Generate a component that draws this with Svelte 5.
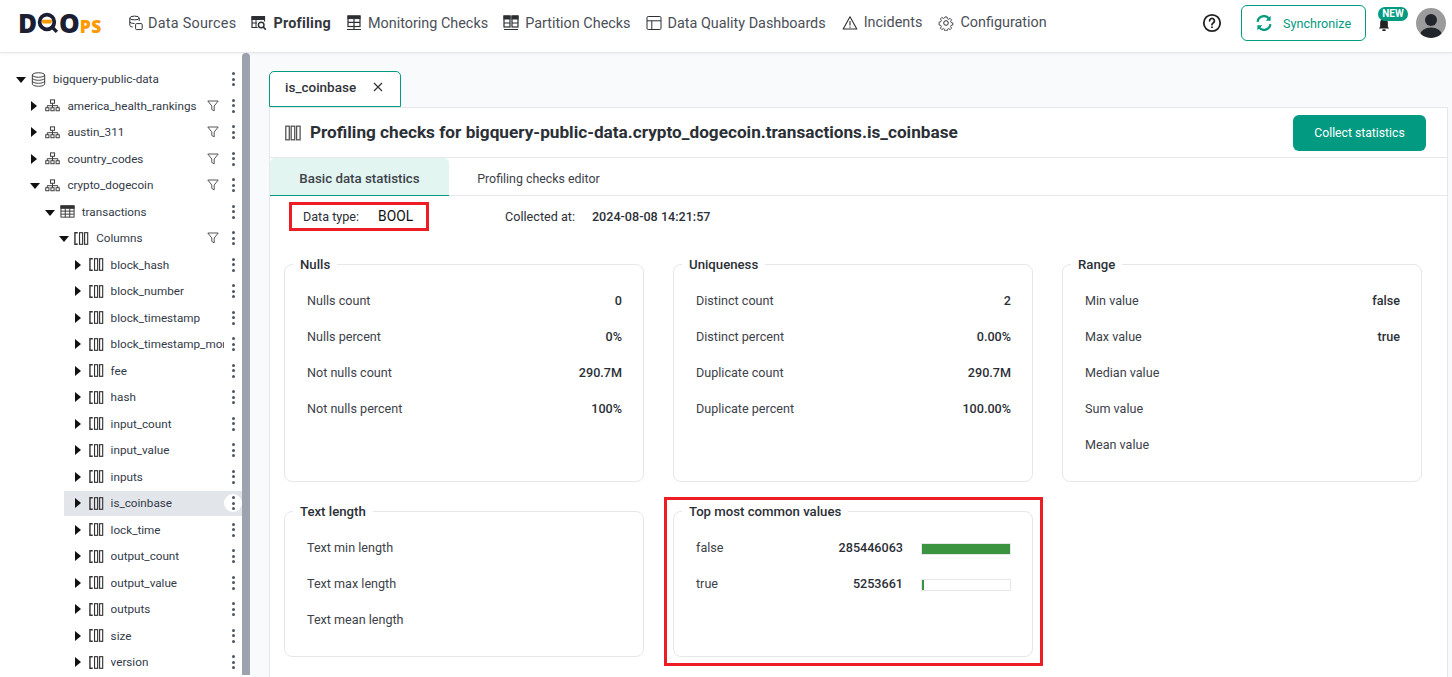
<script lang="ts">
  type Row = { name: string; depth: number; kind: string; open?: boolean; filter?: boolean; active?: boolean };

  const nav = [
    { label: "Data Sources", icon: "sources", wide: true },
    { label: "Profiling", icon: "profiling", active: true, wide: true },
    { label: "Monitoring Checks", icon: "monitoring" },
    { label: "Partition Checks", icon: "partition" },
    { label: "Data Quality Dashboards", icon: "dashboards" },
    { label: "Incidents", icon: "incidents", raised: true },
    { label: "Configuration", icon: "config", raised: true },
  ];

  const columnNames = [
    "block_hash", "block_number", "block_timestamp", "block_timestamp_month", "fee", "hash",
    "input_count", "input_value", "inputs", "is_coinbase", "lock_time", "output_count",
    "output_value", "outputs", "size", "version",
  ];

  const rows: Row[] = [
    { name: "bigquery-public-data", depth: 0, kind: "db", open: true },
    { name: "america_health_rankings", depth: 1, kind: "schema", filter: true },
    { name: "austin_311", depth: 1, kind: "schema", filter: true },
    { name: "country_codes", depth: 1, kind: "schema", filter: true },
    { name: "crypto_dogecoin", depth: 1, kind: "schema", open: true, filter: true },
    { name: "transactions", depth: 2, kind: "table", open: true },
    { name: "Columns", depth: 3, kind: "columns", open: true, filter: true },
    ...columnNames.map((name) => ({ name, depth: 4, kind: "columns", active: name === "is_coinbase" })),
  ];

  const topCards = [
    {
      title: "Nulls",
      rows: [["Nulls count", "0"], ["Nulls percent", "0%"], ["Not nulls count", "290.7M"], ["Not nulls percent", "100%"]],
    },
    {
      title: "Uniqueness",
      rows: [["Distinct count", "2"], ["Distinct percent", "0.00%"], ["Duplicate count", "290.7M"], ["Duplicate percent", "100.00%"]],
    },
    {
      title: "Range",
      rows: [["Min value", "false"], ["Max value", "true"], ["Median value", ""], ["Sum value", ""], ["Mean value", ""]],
    },
  ];

  const textLength = ["Text min length", "Text max length", "Text mean length"];

  const topValues = [
    { label: "false", count: 285446063 },
    { label: "true", count: 5253661 },
  ];
  const maxCount = Math.max(...topValues.map((v) => v.count));
</script>

{#snippet icon(name: string, size: number)}
  <svg class="icon" width={size} height={size} viewBox="0 0 16 16" fill="none" stroke="currentColor" stroke-width="1">
    {#if name === "sources"}
      <ellipse cx="6.5" cy="3" rx="4.7" ry="1.9" />
      <path d="M1.8 3v7.2c0 1 1.2 1.7 3 1.8M11.2 3v3M1.8 6.6c0 1.1 2 1.9 4.7 1.9" />
      <rect x="7.6" y="8.6" width="6.6" height="6" rx="1" />
    {:else if name === "profiling"}
      <path d="M1 1.5h12.5v5M1 1.5v11h5.5" stroke-width="1.2" />
      <rect x="1" y="1.5" width="12.5" height="3" fill="currentColor" />
      <path d="M1 8h5M5 5v7" />
      <circle cx="10.2" cy="10" r="2.8" stroke-width="1.4" />
      <path d="M12.2 12l2.6 2.6" stroke-width="1.6" />
    {:else if name === "monitoring"}
      <rect x="2" y="1" width="12" height="10.5" stroke-width="1.2" />
      <rect x="2" y="1" width="12" height="2.6" fill="currentColor" />
      <path d="M2 7.3h12M8 3.5v8M8 11.5v2.5M1 14.5h14" stroke-width="1.2" />
    {:else if name === "partition"}
      <rect x="1" y="1" width="6" height="11" stroke-width="1.2" />
      <rect x="9" y="1" width="6" height="11" stroke-width="1.2" />
      <rect x="1" y="1" width="6" height="3" fill="currentColor" />
      <rect x="9" y="1" width="6" height="3" fill="currentColor" />
      <path d="M1 8h6M9 8h6M1 14.5h14" stroke-width="1.2" />
    {:else if name === "dashboards"}
      <rect x="1" y="1.5" width="14" height="13" rx="1.2" />
      <path d="M1 5.8h14M5.8 5.8v8.7" />
    {:else if name === "incidents"}
      <path d="M8 1.8L14.8 14H1.2z" stroke-linejoin="round" stroke-width="1.1" />
      <path d="M8 6v4.4M8 11.6v1.2" stroke-width="1.1" />
    {:else if name === "config"}
      <circle cx="8" cy="8" r="2.3" />
      <path d="M6.8 1h2.4l.4 2 1.5.7 1.8-1.1 1.6 1.7-1.1 1.7.6 1.5 2 .5v2.3l-2 .5-.6 1.5 1.1 1.7-1.6 1.7-1.8-1.1-1.5.7-.4 2H6.8l-.4-2-1.5-.7-1.8 1.1-1.6-1.7 1.1-1.7-.6-1.5-2-.5V7l2-.5.6-1.5-1.1-1.7 1.6-1.7 1.8 1.1 1.5-.7z" transform="translate(1.1 1.1) scale(.86)" />
    {:else if name === "db"}
      <ellipse cx="8" cy="3.2" rx="6.6" ry="2.4" />
      <path d="M1.4 3.2v9.6c0 1.3 3 2.4 6.6 2.4s6.6-1.1 6.6-2.4V3.2M1.4 6.4c0 1.3 3 2.4 6.6 2.4s6.6-1.1 6.6-2.4M1.4 9.6c0 1.3 3 2.4 6.6 2.4s6.6-1.1 6.6-2.4" />
    {:else if name === "schema"}
      <rect x="5.8" y="2" width="4.4" height="3.6" />
      <path d="M8 5.6v2.6M2.4 10.4V8.2h11.2v2.2M8 8.2v2.2" />
      <rect x="0.8" y="10.4" width="3.4" height="3.2" />
      <rect x="6.3" y="10.4" width="3.4" height="3.2" />
      <rect x="11.8" y="10.4" width="3.4" height="3.2" />
    {:else if name === "table"}
      <rect x="1" y="2" width="14" height="12" />
      <rect x="1" y="2" width="14" height="2.6" fill="currentColor" />
      <path d="M1 7.6h14M1 10.8h14M5.6 4.6V14M10.4 4.6V14" />
    {:else if name === "columns"}
      <path d="M4 1.8H1v12.4h3" stroke-width="1.5" />
      <rect x="5.9" y="1.8" width="3.3" height="12.4" stroke-width="1.2" />
      <rect x="11.3" y="1.8" width="3.3" height="12.4" stroke-width="1.2" />
    {:else if name === "columns-closed"}
      <rect x="0.8" y="1.2" width="3.5" height="13.6" stroke-width="1.3" />
      <rect x="6.2" y="1.2" width="3.5" height="13.6" stroke-width="1.3" />
      <rect x="11.6" y="1.2" width="3.5" height="13.6" stroke-width="1.3" />
    {/if}
  </svg>
{/snippet}

<div class="page">
  <header class="topbar">
    <div class="logo">
      <span class="logo-dark">D</span>
      <svg class="logo-q" width="22" height="22" viewBox="0 0 21 21">
        <circle cx="9.5" cy="9.5" r="7" fill="#fff" stroke="#1c1f33" stroke-width="3.6" />
        <path d="M4.8 7.5h9.4a5 5 0 0 1-.6 3.4H5.4a5 5 0 0 1-.6-3.4z" fill="#ff9900" />
        <path d="M14.5 14.5l4.5 4.5" stroke="#1c1f33" stroke-width="3.2" />
      </svg>
      <span class="logo-dark">O</span>
      <span class="logo-ps">PS</span>
    </div>
    <nav class="nav">
      {#each nav as item}
        <div class="nav-item" class:active={item.active} class:raised={item.raised} class:wide={item.wide}>
          {@render icon(item.icon, 16)}
          <span>{item.label}</span>
        </div>
      {/each}
    </nav>
    <div class="topbar-right">
      <svg class="help" width="20" height="20" viewBox="0 0 20 20" fill="none" stroke="#222" stroke-width="1.8">
        <circle cx="10" cy="10" r="8.2" />
        <path d="M7.6 7.8a2.4 2.4 0 1 1 3.6 2.1c-.8.5-1.2.9-1.2 1.8" stroke-linecap="round" />
        <path d="M10 13.6v1.4" />
      </svg>
      <button class="sync">
        <svg width="16" height="16" viewBox="0 0 16 16" fill="none" stroke="#029a80" stroke-width="2.2">
          <path d="M1.6 6.8A6.4 6.4 0 0 1 13 3.6" />
          <path d="M14.4 9.2A6.4 6.4 0 0 1 3 12.4" />
          <path d="M14.6 0.8v5h-5z" fill="#029a80" stroke="none" />
          <path d="M1.4 15.2v-5h5z" fill="#029a80" stroke="none" />
        </svg>
        Synchronize
      </button>
      <div class="bell">
        <svg width="12" height="14" viewBox="0 0 14 16" fill="#222">
          <path d="M7 1a4.5 4.5 0 0 1 4.5 4.5V10l1.5 2H1l1.5-2V5.500A4.500 4.500 0 0 1 7 1z" />
          <rect x="5" y="13" width="4" height="2" rx="1" />
        </svg>
        <span class="badge">NEW</span>
      </div>
      <svg class="avatar" width="30" height="30" viewBox="0 0 30 30">
        <defs><clipPath id="avatar-clip"><circle cx="15" cy="15" r="15" /></clipPath></defs>
        <circle cx="15" cy="15" r="15" fill="#9b9b9b" />
        <g clip-path="url(#avatar-clip)" fill="#22262c">
          <circle cx="15" cy="12" r="6" />
          <ellipse cx="15" cy="27" rx="11" ry="7.500" />
        </g>
      </svg>
    </div>
  </header>

  <div class="body">
    <aside class="sidebar">
      <div class="tree">
        {#each rows as row}
          <div class="tree-row" class:active={row.active} style:padding-left="{16 + row.depth * 14.4}px">
            <span class="caret" class:open={row.open}></span>
            <span class="tree-icon">{@render icon(row.kind, 15)}</span>
            <span class="tree-name">{row.name}</span>
            {#if row.filter}
              <svg class="filter" width="12" height="12" viewBox="0 0 12 12" fill="none" stroke="#444" stroke-width="0.9">
                <path d="M0.8 1h10.400L7.200 6v4.800L4.800 9.500V6z" stroke-linejoin="round" />
              </svg>
            {/if}
            <span class="dots"><i></i><i></i><i></i></span>
          </div>
        {/each}
      </div>
      <div class="thumb"></div>
    </aside>

    <main class="main">
      <div class="tab">
        <span>is_coinbase</span>
        <svg width="10" height="10" viewBox="0 0 10 10" stroke="#333" stroke-width="1.2"><path d="M1 1l8 8M9 1l-8 8" /></svg>
      </div>
      <section class="panel">
        <div class="panel-head">
          <span class="panel-icon">{@render icon("columns-closed", 16)}</span>
          <h1>Profiling checks for bigquery-public-data.crypto_dogecoin.transactions.is_coinbase</h1>
          <button class="collect">Collect statistics</button>
        </div>
        <div class="subtabs">
          <div class="subtab on">Basic data statistics</div>
          <div class="subtab">Profiling checks editor</div>
        </div>
        <div class="info">
          <span class="info-label">Data type:</span>
          <span class="info-type">BOOL</span>
          <span class="info-label collected">Collected at:</span>
          <strong>2024-08-08 14:21:57</strong>
        </div>
        <div class="cards">
          {#each topCards as card}
            <fieldset class="card tall">
              <legend>{card.title}</legend>
              {#each card.rows as r}
                <div class="stat"><span>{r[0]}</span><b>{r[1]}</b></div>
              {/each}
            </fieldset>
          {/each}
          <fieldset class="card">
            <legend>Text length</legend>
            {#each textLength as label}
              <div class="stat"><span>{label}</span></div>
            {/each}
          </fieldset>
          <fieldset class="card">
            <legend>Top most common values</legend>
            {#each topValues as v}
              <div class="stat value">
                <span>{v.label}</span>
                <b>{v.count}</b>
                <div class="bar"><div class="fill" style:width="{(v.count / maxCount) * 100}%"></div></div>
              </div>
            {/each}
          </fieldset>
        </div>
      </section>
    </main>
  </div>

  <div class="mark mark-type"></div>
  <div class="mark mark-top"></div>
</div>

<style>
  :global(body) {
    margin: 0;
    background: #fff;
    font-family: Roboto, "Liberation Sans", sans-serif;
    color: #2b2f36;
  }

  .page {
    position: relative;
    height: 677px;
    overflow: hidden;
  }

  .topbar {
    display: flex;
    align-items: center;
    height: 46px;
    padding: 0 6px 6px 18px;
    border-bottom: 1px solid #e5e7eb;
    box-shadow: 0 1px 3px rgba(0, 0, 0, 0.05);
    position: relative;
    box-sizing: content-box;
  }

  .logo {
    display: flex;
    align-items: center;
    width: 110px;
    flex-shrink: 0;
    font-family: "Open Sans", Roboto, sans-serif;
    font-weight: 800;
    line-height: 1;
  }
  .logo-dark {
    font-size: 26px;
    color: #1c1f33;
  }
  .logo-ps {
    font-size: 17.5px;
    color: #ff9900;
    margin: 7px 0 0 0;
    letter-spacing: 0.5px;
  }

  .nav {
    display: flex;
    gap: 15px;
  }
  .nav-item {
    display: flex;
    align-items: center;
    gap: 6px;
    font-size: 14.4px;
    color: #4b5057;
    white-space: nowrap;
  }
  .nav-item.active {
    font-weight: 700;
    color: #33373d;
  }
  .nav-item.wide {
    letter-spacing: 0.25px;
  }
  .nav-item.wide:first-child {
    gap: 4px;
  }
  .nav-item .icon {
    color: #2c2f33;
    flex-shrink: 0;
  }
  .nav-item.raised {
    margin-left: 1px;
  }
  .nav-item.raised span {
    margin-top: -2px;
  }

  .topbar-right {
    margin-left: auto;
    display: flex;
    align-items: center;
  }
  .help {
    margin-right: 19px;
  }
  .sync {
    display: flex;
    align-items: center;
    gap: 11px;
    width: 125px;
    height: 36px;
    padding: 0 0 0 14px;
    box-sizing: border-box;
    background: #fff;
    border: 1px solid #029a80;
    border-radius: 6px;
    color: #029a80;
    font: 400 12.6px Roboto, sans-serif;
  }
  .bell {
    position: relative;
    width: 50px;
    height: 30px;
    display: flex;
    justify-content: flex-start;
    align-items: flex-start;
    padding: 10px 0 0 12px;
    box-sizing: border-box;
  }
  .badge {
    position: absolute;
    left: 12px;
    top: -1px;
    background: #029a80;
    color: #fff;
    font-size: 10px;
    font-weight: 700;
    line-height: 14px;
    width: 30px;
    text-align: center;
    border-radius: 8px;
  }

  .body {
    display: flex;
    height: 624px;
  }

  .sidebar {
    display: flex;
    width: 250px;
    flex-shrink: 0;
    background: #fff;
  }
  .tree {
    width: 242px;
    padding-top: 13.2px;
    overflow: hidden;
    flex-shrink: 0;
  }
  .thumb {
    width: 8px;
    height: 622px;
    background: #9ca3af;
    border-radius: 4px 4px 0 0;
  }

  .tree-row {
    position: relative;
    display: flex;
    align-items: center;
    height: 26.5px;
    box-sizing: border-box;
    font-size: 11.7px;
    color: #333a47;
    white-space: nowrap;
  }
  .tree-row.active::before {
    content: "";
    position: absolute;
    left: 64px;
    right: 0;
    top: 1px;
    bottom: 1px;
    background: #e2e5e9;
  }
  .tree-row > * {
    position: relative;
  }
  .caret {
    width: 0;
    height: 0;
    flex-shrink: 0;
    margin-left: 1px;
    border-left: 6px solid #111;
    border-top: 5px solid transparent;
    border-bottom: 5px solid transparent;
    margin-right: 8px;
  }
  .caret.open {
    margin-left: 0;
    margin-right: 5px;
    margin-top: 2px;
    border-left: 5px solid transparent;
    border-right: 5px solid transparent;
    border-top: 6px solid #111;
    border-bottom: 0;
  }
  .tree-icon {
    display: flex;
    flex-shrink: 0;
    color: #333;
    margin-right: 7px;
  }
  .tree-name {
    flex: 1;
    min-width: 0;
    overflow: hidden;
  }
  .filter {
    flex-shrink: 0;
    margin: 0 5px 0 5px;
  }
  .dots {
    display: flex;
    flex-direction: column;
    align-items: center;
    justify-content: center;
    gap: 2.500px;
    width: 18px;
    height: 18px;
    flex-shrink: 0;
    border-radius: 50%;
  }
  .dots i {
    width: 3px;
    height: 3px;
    border-radius: 50%;
    background: #4b5563;
  }
  .tree-row.active .dots {
    background: #fff;
  }

  .main {
    flex: 1;
    min-width: 0;
    background: #f9fafb;
    padding: 18px 4px 0 19px;
  }

  .tab {
    display: flex;
    align-items: center;
    justify-content: space-between;
    width: 132px;
    height: 36px;
    box-sizing: border-box;
    padding: 0 17px 4px 15px;
    background: #fff;
    border: 1px solid #029a80;
    border-radius: 5px 5px 0 0;
    font-size: 13.5px;
    font-weight: 500;
    color: #30343a;
  }

  .panel {
    background: #fff;
    border: 1px solid #e5e7eb;
    height: 600px;
  }
  .panel-head {
    display: flex;
    align-items: center;
    height: 49px;
    padding: 0 21px 0 15px;
    border-bottom: 1px solid #e5e7eb;
  }
  .panel-icon {
    display: flex;
    color: #555;
    margin-right: 9px;
  }
  h1 {
    flex: 1;
    margin: 0 0 2px;
    font-size: 17.2px;
    font-weight: 700;
    color: #2b2f36;
    white-space: nowrap;
  }
  .collect {
    width: 133px;
    height: 36px;
    border: 0;
    border-radius: 6px;
    background: #029a80;
    color: #fff;
    font: 400 12.2px Roboto, sans-serif;
  }

  .subtabs {
    display: flex;
    height: 37px;
    border-bottom: 1px solid #e5e7eb;
  }
  .subtab {
    width: 179px;
    box-sizing: border-box;
    display: flex;
    align-items: center;
    justify-content: center;
    padding-top: 4px;
    font-size: 12.4px;
    color: #3d4249;
  }
  .subtab.on {
    background: #e2f5f1;
    border-bottom: 1px solid #029a80;
    border-radius: 5px 5px 0 0;
    font-size: 13.3px;
    font-weight: 500;
    height: 38px;
  }

  .info {
    display: flex;
    align-items: center;
    height: 40px;
    padding-left: 33px;
    font-size: 12.6px;
  }
  .info-type {
    margin-left: 19px;
    font-size: 13.8px;
    color: #111;
  }
  .collected {
    margin-left: 92px;
    margin-right: 17px;
  }
  .info strong {
    font-weight: 500;
    color: #2b2f36;
  }

  .cards {
    display: grid;
    grid-template-columns: repeat(3, 360px);
    column-gap: 29px;
    row-gap: 22px;
    padding: 21px 0 0 14px;
  }
  .card {
    margin: 0;
    padding: 10px 21px 0 22px;
    height: 153px;
    box-sizing: border-box;
    border: 1px solid #e5e7eb;
    border-radius: 8px;
    min-width: 0;
  }
  .card.tall {
    height: 225px;
  }
  legend {
    margin-left: -14px;
    padding: 0 7px;
    font-size: 13.2px;
    font-weight: 500;
    color: #2b2f36;
  }
  .stat {
    display: flex;
    justify-content: space-between;
    align-items: center;
    height: 36px;
    font-size: 12.6px;
    color: #3d4249;
  }
  .stat b {
    font-weight: 500;
    color: #2b2f36;
  }
  .stat.value span {
    flex: 1;
  }
  .bar {
    width: 90px;
    height: 12px;
    margin: 3px 0 0 18px;
    background: #fff;
    border: 1px solid #e5e7eb;
    box-sizing: border-box;
  }
  .fill {
    height: 100%;
    background: #3c933f;
  }

  .mark {
    position: absolute;
    border: 3px solid #ee1c25;
    box-sizing: border-box;
    pointer-events: none;
  }
  .mark-type {
    left: 289px;
    top: 202px;
    width: 140px;
    height: 29px;
  }
  .mark-top {
    left: 664px;
    top: 497px;
    width: 379px;
    height: 169px;
  }
</style>
